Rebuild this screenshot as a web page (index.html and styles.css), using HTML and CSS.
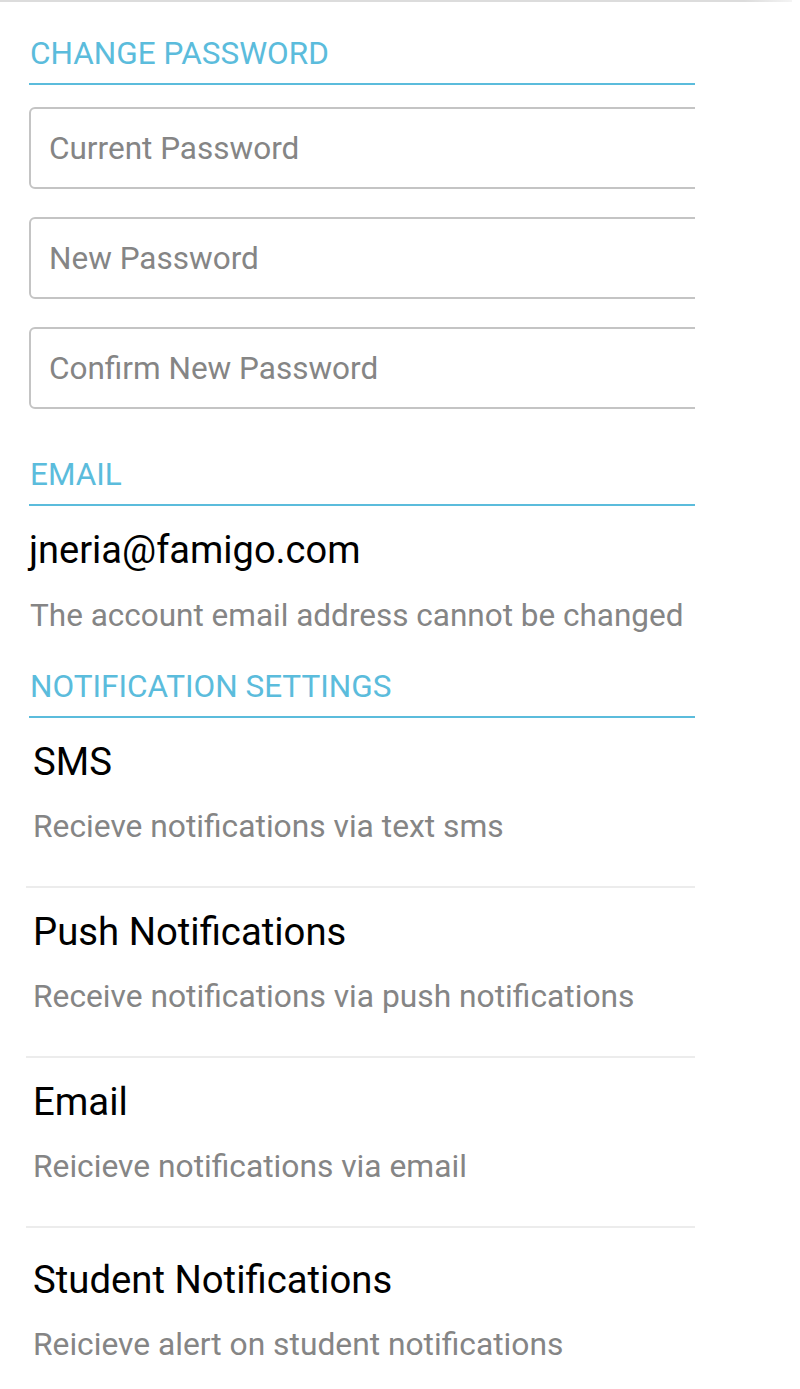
FILE: index.html
```html
<!DOCTYPE html>
<html>
<head>
<meta charset="utf-8">
<link rel="stylesheet" href="styles.css">
</head>
<body>
<div class="topline"></div>
<div class="page">
  <h2 class="section-title first">CHANGE PASSWORD</h2>
  <div class="fields">
    <input class="field" type="password" placeholder="Current Password">
    <input class="field" type="password" placeholder="New Password">
    <input class="field" type="password" placeholder="Confirm New Password">
  </div>
  <h2 class="section-title email-title">EMAIL</h2>
  <div class="email-value">jneria@famigo.com</div>
  <div class="email-note">The account email address cannot be changed</div>
  <h2 class="section-title notif">NOTIFICATION SETTINGS</h2>
  <ul class="notif-list">
    <li class="notif-item">
      <div class="notif-title">SMS</div>
      <div class="notif-desc">Recieve notifications via text sms</div>
    </li>
    <li class="notif-item">
      <div class="notif-title">Push Notifications</div>
      <div class="notif-desc">Receive notifications via push notifications</div>
    </li>
    <li class="notif-item">
      <div class="notif-title">Email</div>
      <div class="notif-desc">Reicieve notifications via email</div>
    </li>
    <li class="notif-item">
      <div class="notif-title">Student Notifications</div>
      <div class="notif-desc">Reicieve alert on student notifications</div>
    </li>
  </ul>
</div>
</body>
</html>
```

FILE: styles.css
```css
html, body {
  margin: 0;
  padding: 0;
  background: #ffffff;
  font-family: Roboto, "Liberation Sans", sans-serif;
}

.topline {
  width: 792px;
  height: 2px;
  background: linear-gradient(to right, #dcdcdc 0, #dcdcdc 94%, #f4f4f4 100%);
}

.page {
  width: 666px;
  padding-left: 29px;
  overflow: hidden;
}

.section-title {
  margin: 0;
  font-size: 31.5px;
  font-weight: 400;
  line-height: 32px;
  color: #5bbcdc;
  padding: 0 0 13px 1px;
  border-bottom: 2px solid #5bbcdc;
}

.section-title.first {
  padding-top: 36px;
}

.section-title.email-title {
  padding-top: 50px;
}

.section-title.notif {
  padding-top: 36px;
}

.fields {
  display: flex;
  flex-direction: column;
  gap: 28px;
  padding-top: 22px;
}

.field {
  box-sizing: border-box;
  width: 720px;
  height: 82px;
  margin: 0;
  border: 2px solid #c4c4c4;
  border-radius: 6px;
  padding: 0 0 0 18px;
  font-family: Roboto, "Liberation Sans", sans-serif;
  font-size: 31.5px;
  color: #333;
  background: #fff;
  outline: none;
}

.field::placeholder {
  color: #858585;
}

.email-value {
  font-size: 38px;
  line-height: 44px;
  color: #000;
  padding-top: 22px;
}

.email-note {
  font-size: 31.5px;
  line-height: 38px;
  color: #858585;
  padding-top: 25px;
  padding-left: 1px;
}

.notif-list {
  list-style: none;
  margin: 0 0 0 -3px;
  padding: 0;
}

.notif-item {
  box-sizing: border-box;
  height: 170px;
  padding: 22px 0 0 7px;
  border-bottom: 2px solid #ececec;
}

.notif-item:last-child {
  border-bottom: none;
  padding-top: 30px;
}

.notif-title {
  font-size: 38.3px;
  line-height: 44px;
  color: #000;
}

.notif-desc {
  font-size: 31.75px;
  line-height: 38px;
  color: #858585;
  padding-top: 24px;
}
```
